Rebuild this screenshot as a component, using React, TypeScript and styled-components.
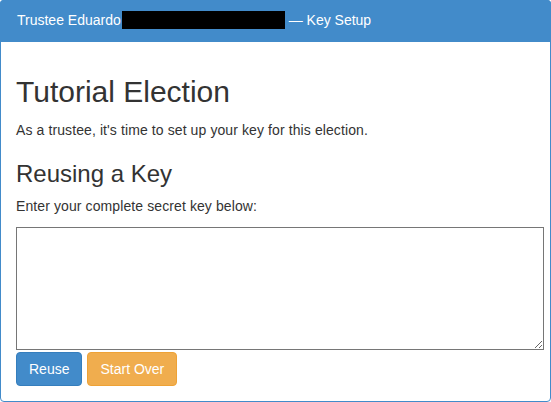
import styled, { createGlobalStyle } from "styled-components";

const GlobalStyle = createGlobalStyle`
  html, body {
    margin: 0;
    padding: 0;
    background: #fff;
  }
  body {
    font-family: "Liberation Sans", Arial, sans-serif;
    font-size: 14px;
    line-height: 1.42857;
    color: #333;
  }
  * {
    box-sizing: border-box;
  }
`;

const Panel = styled.div`
  width: 551px;
  border: 1px solid #428bca;
  border-radius: 4px;
  background: #fff;
`;

const PanelHeading = styled.div`
  margin: -1px -1px 0;
  padding: 10px 16px;
  height: 42px;
  background: #428bca;
  border: 1px solid #428bca;
  border-radius: 3px 3px 0 0;
  color: #fff;
  white-space: nowrap;
`;

const Redacted = styled.span`
  display: inline-block;
  width: 163px;
  height: 18px;
  margin-left: 1px;
  background: #000;
  vertical-align: -4px;
`;

const PanelBody = styled.div`
  padding: 15px;
`;

const Title = styled.h2`
  margin: 18px 0 13px;
  font-size: 30px;
  font-weight: 500;
  line-height: 1.1;
`;

const SubTitle = styled.h3`
  margin: 20px 0 10px;
  font-size: 24px;
  font-weight: 500;
  line-height: 1.1;
`;

const Text = styled.p`
  margin: 0 0 10px;
  letter-spacing: 0.1px;
`;

const KeyInput = styled.textarea`
  display: block;
  width: 528px;
  min-width: 528px;
  height: 123px;
  margin: 2px 0 0;
  border: 1px solid #767676;
  border-radius: 0;
  font-family: "Liberation Mono", monospace;
  font-size: 13px;
`;

const Actions = styled.div`
  display: flex;
  gap: 5px;
  margin-top: 2px;
`;

const Button = styled.button<{ $variant: "primary" | "warning" }>`
  height: 34px;
  padding: 6px 12px;
  font-family: "Liberation Sans", Arial, sans-serif;
  font-size: 14px;
  line-height: 20px;
  color: #fff;
  border-radius: 4px;
  cursor: pointer;
  background: ${(p) => (p.$variant === "primary" ? "#428bca" : "#f0ad4e")};
  border: 1px solid ${(p) => (p.$variant === "primary" ? "#357ebd" : "#eea236")};
`;

export default function App() {
  return (
    <>
      <GlobalStyle />
      <Panel>
        <PanelHeading>
          Trustee Eduardo<Redacted /> — Key Setup
        </PanelHeading>
        <PanelBody>
          <Title>Tutorial Election</Title>
          <Text>As a trustee, it's time to set up your key for this election.</Text>
          <SubTitle>Reusing a Key</SubTitle>
          <Text>Enter your complete secret key below:</Text>
          <KeyInput />
          <Actions>
            <Button $variant="primary">Reuse</Button>
            <Button $variant="warning">Start Over</Button>
          </Actions>
        </PanelBody>
      </Panel>
    </>
  );
}
